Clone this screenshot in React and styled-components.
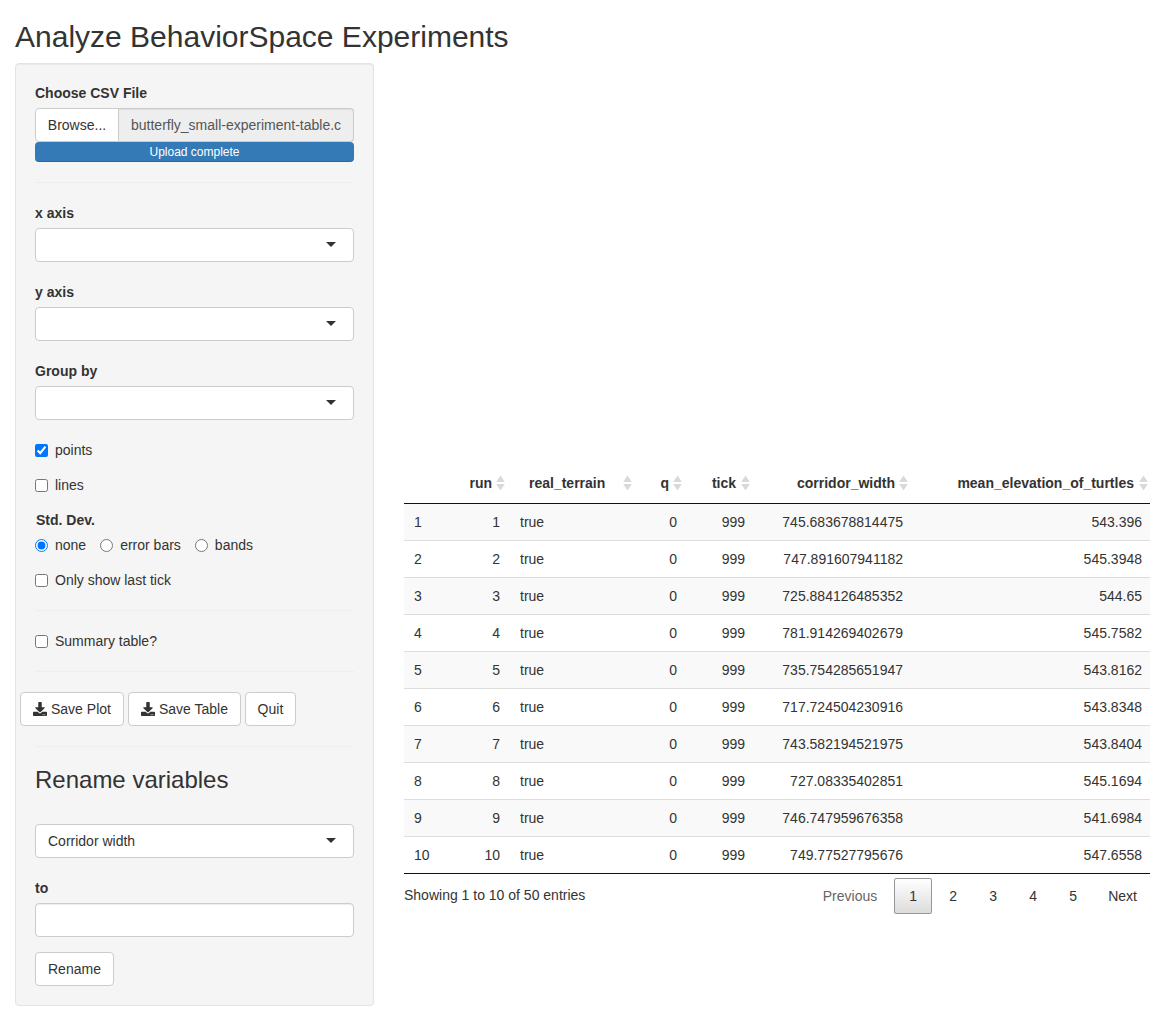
import React from "react";
import styled, { createGlobalStyle } from "styled-components";

const Global = createGlobalStyle`
  html, body { margin: 0; padding: 0; background: #fff; overflow-x: hidden; }
  body { font-family: "Liberation Sans", Arial, sans-serif; font-size: 14px; line-height: 20px; color: #333; }
  * { box-sizing: border-box; }
`;

const Page = styled.div`
  width: 1150px;
  height: 1025px;
  padding: 0 0 0 15px;
  overflow: hidden;
`;
const Title = styled.h2`
  margin: 20px 0 10px;
  font-size: 30px;
  line-height: 33px;
  font-weight: 500;
  color: #333;
`;
const Columns = styled.div`
  display: flex;
  align-items: flex-start;
`;
const Sidebar = styled.form`
  width: 359px;
  height: 943px;
  flex: none;
  padding: 19px;
  background: #f5f5f5;
  border: 1px solid #e3e3e3;
  border-radius: 4px;
  box-shadow: inset 0 1px 1px rgba(0, 0, 0, 0.05);
`;
const Main = styled.main`
  width: 746px;
  margin-left: 30px;
  padding-top: 401px;
`;
const Group = styled.div`
  margin-bottom: ${(p) => p.$mb ?? 20}px;
`;
const Label = styled.label`
  display: block;
  font-weight: 700;
  margin-bottom: 5px;
`;
const FileRow = styled.div`
  display: flex;
  height: 34px;
  width: 319px;
`;
const Browse = styled.span`
  flex: none;
  width: 84px;
  background: #fff;
  border: 1px solid #ccc;
  border-radius: 4px 0 0 4px;
  display: flex;
  align-items: center;
  justify-content: center;
`;
const FileName = styled.input`
  flex: 1;
  min-width: 0;
  font: inherit;
  background: #eee;
  border: 1px solid #ccc;
  border-left: 0;
  border-radius: 0 4px 4px 0;
  color: #555;
  padding: 6px 12px;
  outline: none;
  box-shadow: inset 0 1px 1px rgba(0, 0, 0, 0.075);
`;
const Progress = styled.div`
  width: 319px;
  height: 20px;
  background: #337ab7;
  border-radius: 4px;
  color: #fff;
  font-size: 12px;
  line-height: 20px;
  text-align: center;
  box-shadow: inset 0 -1px 0 rgba(0, 0, 0, 0.15);
`;
const Rule = styled.hr`
  border: 0;
  border-top: 1px solid #eee;
  margin: 20px 0;
`;
const SelectBox = styled.div`
  position: relative;
  height: 34px;
  width: 319px;
  background: #fff;
  border: 1px solid #ccc;
  border-radius: 4px;
  padding: 6px 12px;
  line-height: 20px;
  color: #333;
  &::after {
    content: "";
    position: absolute;
    right: 17px;
    top: 13px;
    border-style: solid;
    border-width: 5px 5px 0;
    border-color: #333 transparent transparent;
  }
`;
const TextBox = styled.input`
  display: block;
  width: 319px;
  height: 34px;
  background: #fff;
  border: 1px solid #ccc;
  border-radius: 4px;
  box-shadow: inset 0 1px 1px rgba(0, 0, 0, 0.075);
  padding: 6px 12px;
`;
const CheckRow = styled.label`
  display: flex;
  align-items: center;
  height: 20px;
  margin-bottom: ${(p) => p.$bottom ?? 15}px;
`;
const Box = styled.input`
  width: 13px;
  height: 13px;
  margin: 0 7px 0 0;
  flex: none;
`;
const GroupLabel = styled.div`
  font-weight: 700;
  margin-left: 1px;
  margin-bottom: 5px;
`;
const RadioLine = styled.div`
  display: flex;
  height: 20px;
  gap: 14px;
  margin-bottom: 15px;
`;
const RadioItem = styled.label`
  display: flex;
  align-items: center;
`;
const Buttons = styled.div`
  display: flex;
  gap: 4px;
  margin-left: -15px;
`;
const Button = styled.button`
  display: inline-flex;
  align-items: center;
  justify-content: center;
  gap: 4px;
  height: 34px;
  width: ${(p) => (p.$w ? `${p.$w}px` : "auto")};
  padding: ${(p) => (p.$w ? "6px 0" : "6px 12px")};
  font: inherit;
  color: #333;
  background: #fff;
  border: 1px solid #ccc;
  border-radius: 4px;
`;
const Heading = styled.h3`
  margin: 20px 0 31px;
  font-size: 24px;
  line-height: 26px;
  font-weight: 500;
  color: #333;
`;
const Table = styled.table`
  width: 746px;
  table-layout: fixed;
  border-collapse: separate;
  border-spacing: 0;
`;
const Column = styled.col`
  width: ${(p) => p.$w}px;
`;
const HeadCell = styled.th`
  position: relative;
  height: 40px;
  padding: 9px ${(p) => p.$pr ?? 18}px 10px ${(p) => p.$pl ?? 10}px;
  font-weight: 700;
  text-align: ${(p) => p.$align || "right"};
  border-bottom: 1px solid #111;
  white-space: nowrap;
`;
const SortIcon = styled.svg`
  position: absolute;
  top: 11px;
  right: ${(p) => p.$right ?? 5}px;
`;
const Row = styled.tr`
  background: ${(p) => (p.$odd ? "#f9f9f9" : "#fff")};
`;
const Cell = styled.td`
  height: ${(p) => (p.$first ? 36 : 37)}px;
  padding: 8px ${(p) => p.$pr ?? 10}px 8px 10px;
  text-align: ${(p) => p.$align || "right"};
  border-top: ${(p) => (p.$first ? "0" : "1px solid #ddd")};
  white-space: nowrap;
`;
const TableFoot = styled.div`
  border-top: 1px solid #111;
  display: flex;
  justify-content: space-between;
  align-items: flex-start;
`;
const Info = styled.div`
  padding-top: 11px;
`;
const Pager = styled.div`
  display: flex;
  margin-top: 4px;
`;
const PageBtn = styled.span`
  height: 36px;
  min-width: ${(p) => p.$w || 40}px;
  display: flex;
  align-items: center;
  justify-content: center;
  padding: 0 12px;
  margin-left: ${(p) => p.$ml || 0}px;
  border: 1px solid transparent;
  border-radius: 2px;
  color: ${(p) => (p.$muted ? "#666" : "#333")};
  ${(p) =>
    p.$current &&
    `border-color:#979797;background:linear-gradient(to bottom,#fff 0%,#dcdcdc 100%);`}
`;

const rows = [
  [1, "745.683678814475", "543.396"],
  [2, "747.891607941182", "545.3948"],
  [3, "725.884126485352", "544.65"],
  [4, "781.914269402679", "545.7582"],
  [5, "735.754285651947", "543.8162"],
  [6, "717.724504230916", "543.8348"],
  [7, "743.582194521975", "543.8404"],
  [8, "727.08335402851", "545.1694"],
  [9, "746.747959676358", "541.6984"],
  [10, "749.77527795676", "547.6558"],
];

const widths = [46, 60, 127, 50, 68, 158, 237];

const Sort = ({ right }) => (
  <SortIcon $right={right} width="9" height="16" viewBox="0 0 9 16" aria-hidden="true">
    <path d="M4.5 0.5 L8.8 7 L0.2 7 Z" fill="#d9d9d9" />
    <path d="M4.5 15.5 L8.8 9 L0.2 9 Z" fill="#d9d9d9" />
  </SortIcon>
);

const DownloadIcon = () => (
  <svg width="14" height="14" viewBox="0 0 512 512" aria-hidden="true">
    <path
      fill="#333"
      d="M216 0h80c13.3 0 24 10.7 24 24v168h87.7c17.8 0 26.7 21.5 14.1 34.1L269.7 378.3c-7.5 7.5-19.8 7.5-27.3 0L90.1 226.1c-12.6-12.6-3.7-34.1 14.1-34.1H192V24c0-13.3 10.7-24 24-24zm296 376v112c0 13.3-10.7 24-24 24H24c-13.3 0-24-10.7-24-24V376c0-13.3 10.7-24 24-24h146.7l49 49c20.1 20.1 52.5 20.1 72.6 0l49-49H488c13.3 0 24 10.7 24 24zm-124 88c0-11-9-20-20-20s-20 9-20 20 9 20 20 20 20-9 20-20zm64 0c0-11-9-20-20-20s-20 9-20 20 9 20 20 20 20-9 20-20z"
    />
  </svg>
);

export default function App() {
  return (
    <Page>
      <Global />
      <Title>Analyze BehaviorSpace Experiments</Title>
      <Columns>
        <Sidebar onSubmit={(e) => e.preventDefault()}>
          <Group $mb={0}>
            <Label>Choose CSV File</Label>
            <FileRow>
              <Browse>Browse...</Browse>
              <FileName readOnly value="butterfly_small-experiment-table.csv" />
            </FileRow>
            <Progress>Upload complete</Progress>
          </Group>
          <Rule />
          <Group>
            <Label>x axis</Label>
            <SelectBox />
          </Group>
          <Group>
            <Label>y axis</Label>
            <SelectBox />
          </Group>
          <Group>
            <Label>Group by</Label>
            <SelectBox />
          </Group>
          <CheckRow>
            <Box type="checkbox" defaultChecked />
            points
          </CheckRow>
          <CheckRow>
            <Box type="checkbox" />
            lines
          </CheckRow>
          <GroupLabel>Std. Dev.</GroupLabel>
          <RadioLine>
            <RadioItem>
              <Box type="radio" name="sd" defaultChecked />
              none
            </RadioItem>
            <RadioItem>
              <Box type="radio" name="sd" />
              error bars
            </RadioItem>
            <RadioItem>
              <Box type="radio" name="sd" />
              bands
            </RadioItem>
          </RadioLine>
          <CheckRow $bottom={0}>
            <Box type="checkbox" />
            Only show last tick
          </CheckRow>
          <Rule />
          <CheckRow $bottom={0}>
            <Box type="checkbox" />
            Summary table?
          </CheckRow>
          <Rule />
          <Buttons>
            <Button type="button">
              <DownloadIcon />
              Save Plot
            </Button>
            <Button type="button">
              <DownloadIcon />
              Save Table
            </Button>
            <Button type="button" $w={51}>Quit</Button>
          </Buttons>
          <Rule />
          <Heading>Rename variables</Heading>
          <Group>
            <SelectBox>Corridor width</SelectBox>
          </Group>
          <Group $mb={15}>
            <Label>to</Label>
            <TextBox />
          </Group>
          <Button type="button">Rename</Button>
        </Sidebar>
        <Main>
          <Table>
            <colgroup>
              {widths.map((w, i) => (
                <Column key={i} $w={w} />
              ))}
            </colgroup>
            <thead>
              <tr>
                <HeadCell />
                <HeadCell>
                  run
                  <Sort right={5} />
                </HeadCell>
                <HeadCell $align="left" $pl={19}>
                  real_terrain
                  <Sort right={5} />
                </HeadCell>
                <HeadCell>
                  q
                  <Sort right={5} />
                </HeadCell>
                <HeadCell $pr={19}>
                  tick
                  <Sort right={5} />
                </HeadCell>
                <HeadCell>
                  corridor_width
                  <Sort right={5} />
                </HeadCell>
                <HeadCell $pr={16}>
                  mean_elevation_of_turtles
                  <Sort right={2} />
                </HeadCell>
              </tr>
            </thead>
            <tbody>
              {rows.map(([n, w, e], i) => (
                <Row key={n} $odd={i % 2 === 0}>
                  <Cell $first={i === 0} $align="left">{n}</Cell>
                  <Cell $first={i === 0}>{n}</Cell>
                  <Cell $first={i === 0} $align="left">true</Cell>
                  <Cell $first={i === 0}>0</Cell>
                  <Cell $first={i === 0}>999</Cell>
                  <Cell $first={i === 0}>{w}</Cell>
                  <Cell $first={i === 0} $pr={8}>{e}</Cell>
                </Row>
              ))}
            </tbody>
          </Table>
          <TableFoot>
            <Info>Showing 1 to 10 of 50 entries</Info>
            <Pager>
              <PageBtn $muted>Previous</PageBtn>
              <PageBtn $current $w={38} $ml={4}>1</PageBtn>
              <PageBtn $ml={1}>2</PageBtn>
              <PageBtn>3</PageBtn>
              <PageBtn>4</PageBtn>
              <PageBtn>5</PageBtn>
              <PageBtn $ml={2}>Next</PageBtn>
            </Pager>
          </TableFoot>
        </Main>
      </Columns>
    </Page>
  );
}
